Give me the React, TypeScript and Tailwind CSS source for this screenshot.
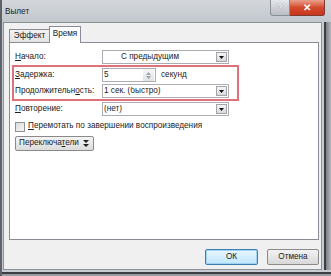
import type { ReactNode } from "react";

const font = "font-['Liberation_Sans',Arial,sans-serif]";

function Tri() {
  return (
    <svg width="5" height="3" viewBox="0 0 5 3">
      <path d="M0 0h5L2.5 3z" fill="#111" />
    </svg>
  );
}

function Select({ text, indent = false }: { text: string; indent?: boolean }) {
  return (
    <div className="flex h-[14px] w-[127px] items-center border border-[#abadb3] bg-white">
      <span className={`flex-1 truncate leading-none ${indent ? "pl-[18px]" : "pl-[1px]"}`}>{text}</span>
      <div className="mr-[1px] flex h-[10px] w-[11px] items-center justify-center border border-[#a0a4aa] bg-gradient-to-b from-[#f6f6f6] to-[#d9d9d9]">
        <Tri />
      </div>
    </div>
  );
}

function Row({ label, children }: { label: ReactNode; children: ReactNode }) {
  return (
    <div className="flex h-[14px] items-center">
      <div className="w-[87px] leading-none">{label}</div>
      {children}
    </div>
  );
}

export default function App() {
  return (
    <div className={`${font} flex h-[276px] w-[331px] flex-col border-l-2 border-[#5f6368] bg-[#c3c8ce] text-[8.2px] text-[#1b1b1b]`}>
      {/* title bar */}
      <div className="flex h-[22px] items-start bg-gradient-to-b from-[#d3d7dc] to-[#c3c8ce]">
        <span className="mt-[6px] ml-[3px] text-[8.2px] text-[#222]">Вылет</span>
        <div className="ml-auto mr-[6px] flex">
          <div className="flex h-[16px] w-[20px] items-center justify-center rounded-bl-[3px] border border-t-0 border-[#8a8f96] bg-gradient-to-b from-[#e4e7eb] to-[#b9bec5] text-[9px] font-bold text-white [text-shadow:0_0_1px_#555]">
            ?
          </div>
          <div className="flex h-[16px] w-[35px] items-center justify-center rounded-br-[3px] border border-t-0 border-l-0 border-[#7d3a30] bg-gradient-to-b from-[#e8a08c] via-[#d2492c] to-[#c9361a] text-[10px] font-bold text-white">
            ✕
          </div>
        </div>
      </div>

      <div className="flex flex-1">
        {/* client area */}
        <div className="ml-[1px] flex flex-1 flex-col border border-[#8d9298] bg-[#f0f0f0] pt-[3px] pl-[5px] pr-[2px]">
          {/* tabs */}
          <div className="relative z-10 -mb-px flex items-end">
            <div className="flex h-[14px] w-[40px] items-center justify-center border border-r-0 border-[#898c95] bg-gradient-to-b from-[#f2f2f2] to-[#e3e3e3]">
              Эффект
            </div>
            <div className="flex h-[17px] w-[32px] items-center justify-center border border-b-0 border-[#898c95] bg-white pb-[1px]">
              Время
            </div>
          </div>

          {/* panel */}
          <div className="flex h-[198px] flex-col border border-[#898c95] bg-white pt-[7px] pl-[5px]">
            <Row label={<><u>Н</u>ачало:</>}>
              <Select text="С предыдущим" indent />
            </Row>

            <div className="mt-[1px] -ml-[3px] w-[227px] border-2 border-[#e2707a] py-[1px] pl-[1px]">
              <Row label={<><u>З</u>адержка:</>}>
                <div className="flex h-[14px] w-[54px] items-center border border-[#abadb3] bg-white">
                  <span className="flex-1 pl-[1px] leading-none">5</span>
                  <div className="mr-[1px] flex h-[12px] w-[11px] flex-col items-center justify-center gap-[1px] bg-gradient-to-b from-[#f7f7f7] to-[#e2e2e2]">
                    <svg width="5" height="3" viewBox="0 0 5 3"><path d="M0 3h5L2.5 0z" fill="#9aa5b0" /></svg>
                    <svg width="5" height="3" viewBox="0 0 5 3"><path d="M0 0h5L2.5 3z" fill="#9aa5b0" /></svg>
                  </div>
                </div>
                <span className="ml-[5px] leading-none">секунд</span>
              </Row>
              <div className="mt-[2px]">
                <Row label={<>Продолжительн<u>о</u>сть:</>}>
                  <Select text="1 сек. (быстро)" />
                </Row>
              </div>
            </div>

            <div className="mt-[1px]">
              <Row label={<><u>П</u>овторение:</>}>
                <Select text="(нет)" />
              </Row>
            </div>

            <div className="mt-[5px] flex h-[11px] items-center">
              <div className="h-[10px] w-[10px] border border-[#8e8f8f] bg-gradient-to-br from-[#dcdcdc] to-[#f6f6f6]" />
              <span className="ml-[3px] leading-none">
                <u>П</u>еремотать по завершении воспроизведения
              </span>
            </div>

            <div className="mt-[4px] flex h-[15px] w-[79px] items-center rounded-[2px] border border-[#8a8a8a] bg-gradient-to-b from-[#f4f4f4] to-[#dcdcdc] pl-[3px]">
              <span className="leading-none">
                Переключа<u>т</u>ели
              </span>
              <svg className="ml-[4px]" width="6" height="7" viewBox="0 0 6 7">
                <path d="M0 0h6L3 3z M0 4h6L3 7z" fill="#222" />
              </svg>
            </div>
          </div>

          {/* buttons */}
          <div className="mt-[9px] flex justify-end gap-[9px]">
            <div className="flex h-[16px] w-[53px] items-center justify-center rounded-[2px] border border-[#3c7fb1] bg-gradient-to-b from-[#eaf6fd] to-[#bee6fd] shadow-[inset_0_0_0_1px_#9fd3f4]">
              ОК
            </div>
            <div className="flex h-[16px] w-[52px] items-center justify-center rounded-[2px] border border-[#8a8a8a] bg-gradient-to-b from-[#f2f2f2] to-[#d8d8d8]">
              Отмена
            </div>
          </div>
        </div>

        {/* right frame shadow */}
        <div className="flex w-[9px]">
          <div className="w-[2px] bg-[#c9cdd2]" />
          <div className="w-[2px] bg-[#3b3d40]" />
          <div className="flex-1 bg-gradient-to-r from-[#7d8186] to-[#b5b9be]" />
        </div>
      </div>

      {/* bottom frame */}
      <div className="flex flex-col">
        <div className="h-[2px] bg-[#c9cdd2]" />
        <div className="h-[2px] bg-[#3b3d40]" />
        <div className="h-[2px] bg-[#9a9ea3]" />
      </div>
    </div>
  );
}
